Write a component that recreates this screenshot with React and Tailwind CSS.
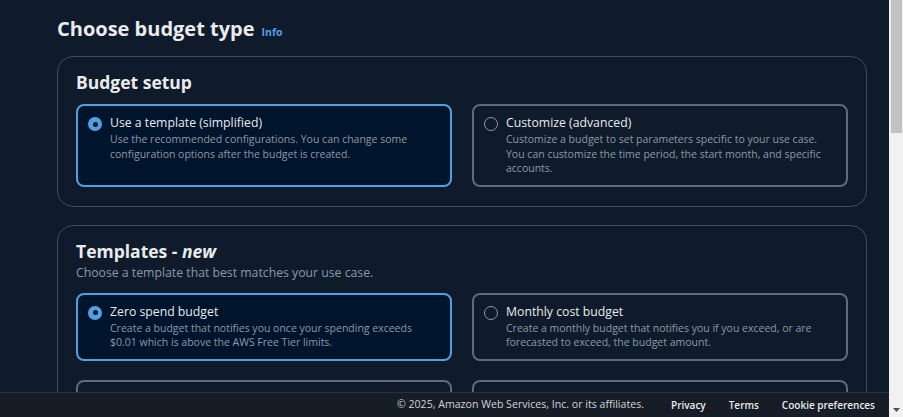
import React, { useState } from 'react';

const setupOptions = [
  {
    id: 'template',
    label: 'Use a template (simplified)',
    description:
      'Use the recommended configurations. You can change some configuration options after the budget is created.',
  },
  {
    id: 'custom',
    label: 'Customize (advanced)',
    description:
      'Customize a budget to set parameters specific to your use case. You can customize the time period, the start month, and specific accounts.',
  },
];

const templateOptions = [
  {
    id: 'zero',
    label: 'Zero spend budget',
    description:
      'Create a budget that notifies you once your spending exceeds $0.01 which is above the AWS Free Tier limits.',
  },
  {
    id: 'monthly',
    label: 'Monthly cost budget',
    description:
      'Create a monthly budget that notifies you if you exceed, or are forecasted to exceed, the budget amount.',
  },
  {
    id: 'savings',
    label: 'Daily Savings Plans coverage budget',
    description:
      'Create a coverage budget for your Savings Plans that notifies you when you fall below the defined target.',
  },
  {
    id: 'reservation',
    label: 'Daily reservation utilization budget',
    description:
      'Create a utilization budget for your reservations that notifies you when you fall below the defined target.',
  },
];

const Radio = ({ checked }) =>
  checked ? (
    <span className="mt-[3px] flex h-[14px] w-[14px] shrink-0 items-center justify-center rounded-full bg-[#539fe5]">
      <span className="h-[5px] w-[5px] rounded-full bg-[#0f1b2a]" />
    </span>
  ) : (
    <span className="mt-[3px] h-[14px] w-[14px] shrink-0 rounded-full border-[1.5px] border-[#8d99a8]" />
  );

const Tile = ({ option, checked, onSelect }) => (
  <button
    type="button"
    onClick={onSelect}
    className={`flex gap-[8px] rounded-[8px] border-2 pl-[10px] pr-[11px] pt-[8px] pb-[9px] text-left ${
      checked ? 'border-[#539fe5] bg-[#00142b]' : 'border-[#5f6b7a] bg-transparent'
    }`}
  >
    <Radio checked={checked} />
    <span className="flex flex-col">
      <span className="text-[12.25px] leading-[18px] text-[#e9ebed]">{option.label}</span>
      <span className="text-[10.5px] leading-[14.5px] text-[#8d99a8]">{option.description}</span>
    </span>
  </button>
);

const Container = ({ children }) => (
  <section className="rounded-[16px] border border-[#414d5c] px-[18px] pt-[15px] pb-[19px]">
    {children}
  </section>
);

const App = () => {
  const [setup, setSetup] = useState('template');
  const [template, setTemplate] = useState('zero');

  return (
    <div
      className="flex h-[417px] w-full overflow-hidden bg-[#0f1b2a]"
      style={{ fontFamily: '"Open Sans", "Noto Sans", Arial, sans-serif' }}
    >
      <div className="flex min-w-0 flex-1 flex-col">
        <main className="min-h-0 flex-1 overflow-hidden pl-[57px] pr-[22px]">
          <div className="flex items-baseline gap-[7px] pt-[14px] pb-[12px]">
            <h1 className="text-[20px] leading-[30px] font-bold text-[#e9ebed]">Choose budget type</h1>
            <a className="text-[10.5px] font-bold text-[#539fe5]">Info</a>
          </div>

          <div className="flex flex-col gap-[18px]">
            <Container>
              <h2 className="pb-[11px] text-[17.5px] leading-[21px] font-bold text-[#e9ebed]">Budget setup</h2>
              <div className="grid grid-cols-2 gap-[20px]">
                {setupOptions.map((o) => (
                  <Tile key={o.id} option={o} checked={setup === o.id} onSelect={() => setSetup(o.id)} />
                ))}
              </div>
            </Container>

            <Container>
              <h2 className="text-[17.5px] leading-[21px] font-bold text-[#e9ebed]">
                Templates - <i>new</i>
              </h2>
              <p className="pb-[10px] text-[12.25px] leading-[21px] text-[#8d99a8]">
                Choose a template that best matches your use case.
              </p>
              <div className="grid grid-cols-2 gap-x-[20px] gap-y-[19px]">
                {templateOptions.map((o) => (
                  <Tile key={o.id} option={o} checked={template === o.id} onSelect={() => setTemplate(o.id)} />
                ))}
              </div>
            </Container>
          </div>
        </main>

        <footer className="flex h-[25px] shrink-0 items-center justify-end gap-[23px] border-t border-[#2a323d] bg-[#161d26] pr-[14px] text-[#d1d5db]">
          <span className="mr-[4px] text-[10.6px]">© 2025, Amazon Web Services, Inc. or its affiliates.</span>
          <a className="text-[10px] font-semibold text-[#e9ebed]">Privacy</a>
          <a className="text-[10px] font-semibold text-[#e9ebed]">Terms</a>
          <a className="text-[10px] font-semibold text-[#e9ebed]">Cookie preferences</a>
        </footer>
      </div>

      <div className="flex w-[14px] shrink-0 flex-col bg-[#f1f1f1] pl-[2px]">
        <div className="h-[133px] w-[11px] bg-[#c1c1c1]" />
        <div className="flex-1" />
        <div className="flex h-[14px] items-center justify-center pr-[2px]">
          <svg width="7" height="4" viewBox="0 0 7 4">
            <path d="M0 0h7L3.5 4z" fill="#505050" />
          </svg>
        </div>
      </div>
    </div>
  );
};

export default App;
